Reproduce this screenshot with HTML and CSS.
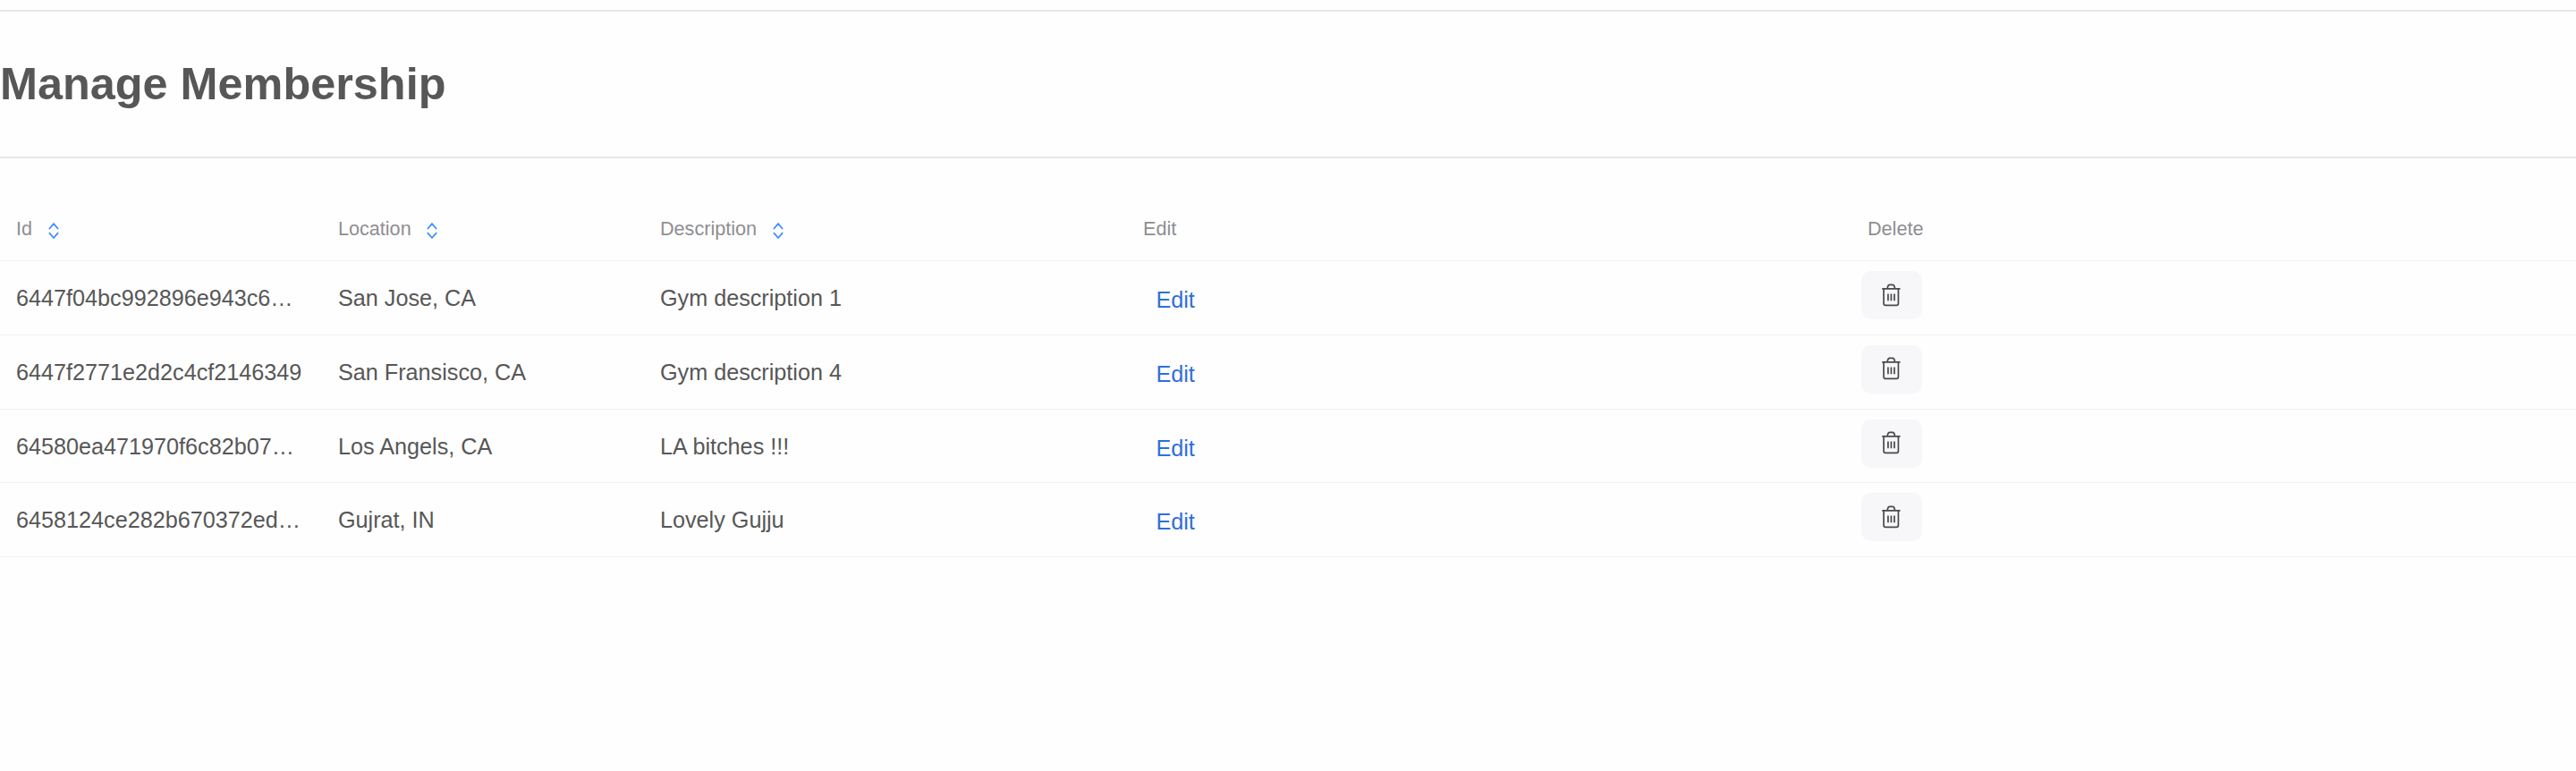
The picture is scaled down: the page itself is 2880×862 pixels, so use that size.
FILE: index.html
```html
<!DOCTYPE html>
<html lang="en">
<head>
<meta charset="utf-8">
<title>Manage Membership</title>
<link rel="stylesheet" href="styles.css">
</head>
<body>
<svg class="sprite" aria-hidden="true">
  <symbol id="sort" viewBox="0 0 12 20">
    <path d="M.9 8 6 2.2 11.1 8M.9 12.2 6 18l5.1-5.8"/>
  </symbol>
  <symbol id="trash" viewBox="0 0 22 26">
    <path d="M1.2 5.9h20.3M3 5.9v16.3a2.2 2.2 0 0 0 2.2 2.2h12a2.2 2.2 0 0 0 2.2-2.2V5.9M7.1 5.9c.2-3.2 1.2-4.6 2.9-4.6h2.6c1.7 0 2.7 1.4 2.9 4.6M7.9 11.5v7.7M11.4 11.5v7.7M14.9 11.5v7.7"/>
  </symbol>
</svg>
<header class="page-header">
  <h1 class="title">Manage Membership</h1>
</header>
<main class="table">
  <div class="row head">
    <div class="cell">Id<svg class="sort"><use href="#sort"/></svg></div>
    <div class="cell">Location<svg class="sort"><use href="#sort"/></svg></div>
    <div class="cell">Description<svg class="sort"><use href="#sort"/></svg></div>
    <div class="cell">Edit</div>
    <div class="cell">Delete</div>
  </div>
  <div class="row">
    <div class="cell">6447f04bc992896e943c6…</div>
    <div class="cell">San Jose, CA</div>
    <div class="cell">Gym description 1</div>
    <div class="cell action"><a class="link">Edit</a></div>
    <div class="cell action"><button class="delete" aria-label="Delete"><svg class="trash"><use href="#trash"/></svg></button></div>
  </div>
  <div class="row">
    <div class="cell">6447f2771e2d2c4cf2146349</div>
    <div class="cell">San Fransisco, CA</div>
    <div class="cell">Gym description 4</div>
    <div class="cell action"><a class="link">Edit</a></div>
    <div class="cell action"><button class="delete" aria-label="Delete"><svg class="trash"><use href="#trash"/></svg></button></div>
  </div>
  <div class="row">
    <div class="cell">64580ea471970f6c82b07…</div>
    <div class="cell">Los Angels, CA</div>
    <div class="cell">LA bitches !!!</div>
    <div class="cell action"><a class="link">Edit</a></div>
    <div class="cell action"><button class="delete" aria-label="Delete"><svg class="trash"><use href="#trash"/></svg></button></div>
  </div>
  <div class="row">
    <div class="cell">6458124ce282b670372ed…</div>
    <div class="cell">Gujrat, IN</div>
    <div class="cell">Lovely Gujju</div>
    <div class="cell action"><a class="link">Edit</a></div>
    <div class="cell action"><button class="delete" aria-label="Delete"><svg class="trash"><use href="#trash"/></svg></button></div>
  </div>
</main>
</body>
</html>
```
FILE: styles.css
```css
* { box-sizing: border-box; }

body {
  margin: 0;
  padding-top: 11px;
  background: #fefefe;
  color: #575757;
  font: 25.2px/36px "Liberation Sans", Arial, sans-serif;
}

.sprite { display: none; }

.page-header {
  height: 166px;
  border-top: 2px solid #e5e5ea;
  border-bottom: 2px solid #e5e5ea;
  padding-top: 45px;
}

.title {
  margin: 0;
  font-size: 50.4px;
  line-height: 72px;
  font-weight: 700;
}

.table { padding-top: 42px; }

.row {
  display: grid;
  grid-template-columns: 360px 360px 540px 810px 1fr;
  height: 82.8px;
  border-bottom: 1px solid #f2f2f5;
}

.head {
  height: 73px;
  font-size: 21.6px;
  color: #8e8e93;
}

.cell {
  padding: 23px 18px 0;
  min-width: 0;
  white-space: nowrap;
}

.head .cell {
  display: flex;
  padding-top: 19px;
}

.action { padding: 11px 10.8px 0; }

.link {
  display: block;
  padding: 14px 21.6px 0;
  color: #2f6fda;
}

.sort {
  width: 12px;
  height: 20px;
  margin: 9.5px 0 0 17.5px;
  fill: none;
  stroke: #3f8efa;
  stroke-width: 1.8;
}

.delete {
  display: flex;
  align-items: center;
  justify-content: center;
  width: 68px;
  height: 54px;
  padding: 0 2px 1px 0;
  border: 0;
  border-radius: 10.8px;
  background: #f7f7fa;
  color: #4a4a4a;
}

.trash {
  width: 22px;
  height: 26px;
  fill: none;
  stroke: currentColor;
  stroke-width: 1.7;
}
```
